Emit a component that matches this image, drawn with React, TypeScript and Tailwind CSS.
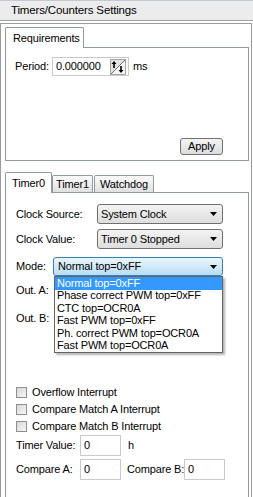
import React, {JSX} from "react";

const modes: string[] = [
    "Normal top=0xFF",
    "Phase correct PWM top=0xFF",
    "CTC top=OCR0A",
    "Fast PWM top=0xFF",
    "Ph. correct PWM top=OCR0A",
    "Fast PWM top=OCR0A",
];

const Arrow = (): JSX.Element => (
    <svg width="7" height="4" viewBox="0 0 7 4">
        <path d="M0 0h7L3.5 4z" fill="#000"/>
    </svg>
);

const Select = ({value, width}: {value: string; width: string}): JSX.Element => (
    <div className={`${width} h-[20px] rounded-[3px] border border-[#707070] bg-linear-to-b from-[#f3f3f3] to-[#dedede] flex items-center justify-between pl-[3px] pr-[5px]`}>
        <span>{value}</span>
        <Arrow/>
    </div>
);

const Check = ({label}: {label: string}): JSX.Element => (
    <div className="h-[17px] flex items-center">
        <div className="w-[11px] h-[11px] border border-[#8e8f8f] bg-linear-to-br from-[#d8d8d8] to-[#f6f6f6]"/>
        <span className="ml-[5px]">{label}</span>
    </div>
);

const Field = ({value}: {value: string}): JSX.Element => (
    <div className="w-[41px] h-[21px] border border-[#c9cacf] bg-white flex items-center pl-[3px]">
        {value}
    </div>
);

const Spinner = (): JSX.Element => (
    <svg width="16" height="16" viewBox="0 0 16 16">
        <rect x="0.5" y="0.5" width="15" height="15" fill="#e4e4e4" stroke="#a5a5a5"/>
        <path d="M1 15L15 1V15z" fill="#f7f7f7"/>
        <path d="M1 15L15 1" stroke="#707070" strokeWidth="1"/>
        <path d="M4 2l-2.5 3h1.7v4h1.6V5h1.7z" fill="#000"/>
        <path d="M11 14l2.5-3h-1.7V7h-1.6v4H8.5z" fill="#000"/>
    </svg>
);

const App: React.FC = (): JSX.Element => {
    return (
        <div className="w-[253px] h-[497px] overflow-hidden bg-white font-['Liberation_Sans',Arial,sans-serif] text-[11px] tracking-[-0.15px] text-black leading-none whitespace-nowrap">
            <div className="h-[21px] border-t border-b border-t-[#c2cad8] border-b-[#a3a3a3] bg-[#ececec] flex items-center pl-[11px] text-[11.5px]">
                Timers/Counters Settings
            </div>

            <div className="mt-[2px] w-[252px] h-[474px] border-x border-t border-[#9c9c9c] pl-[4px] pr-[2px] pt-[3px] flex flex-col">
                {/* requirements */}
                <div className="flex">
                    <div className="relative z-10 -mb-px h-[21px] w-[79px] rounded-t-[2px] border-x border-t border-[#919b9c] bg-white flex items-center pl-[7px]">
                        Requirements
                    </div>
                </div>
                <div className="h-[114px] border border-[#919b9c] pl-[9px] pt-[9px] flex flex-col">
                    <div className="h-[19px] flex items-center">
                        <span className="w-[37px]">Period:</span>
                        <div className="w-[77px] h-[19px] border border-[#c9cacf] flex items-center pl-[3px] pr-[2px]">
                            <span>0.000000</span>
                            <div className="ml-auto">
                                <Spinner/>
                            </div>
                        </div>
                        <span className="ml-[4px]">ms</span>
                    </div>
                    <div className="flex justify-end mt-[62px] pr-[25px]">
                        <div className="w-[43px] h-[17px] rounded-[3px] border border-[#707070] bg-linear-to-b from-[#f4f4f4] to-[#dcdcdc] flex items-center justify-center">
                            Apply
                        </div>
                    </div>
                </div>

                {/* timers */}
                <div className="flex items-end mt-[11px]">
                    <div className="relative z-10 -mb-px h-[21px] w-[47px] rounded-t-[2px] border-x border-t border-[#919b9c] bg-white flex items-center justify-center">
                        Timer0
                    </div>
                    <div className="h-[17px] w-[41px] rounded-t-[2px] border-x border-t border-[#919b9c] bg-linear-to-b from-[#fbfbfb] to-[#e0e0e0] flex items-center justify-center">
                        Timer1
                    </div>
                    <div className="h-[17px] w-[60px] ml-[1px] rounded-t-[2px] border-x border-t border-[#919b9c] bg-linear-to-b from-[#fbfbfb] to-[#e0e0e0] flex items-center justify-center">
                        Watchdog
                    </div>
                </div>
                <div className="flex-1 border-x border-t border-[#919b9c] pl-[10px] pt-[11px] flex flex-col">
                    <div className="flex items-center">
                        <span className="w-[81px]">Clock Source:</span>
                        <Select value="System Clock" width="w-[126px]"/>
                    </div>
                    <div className="flex items-center mt-[5px]">
                        <span className="w-[81px]">Clock Value:</span>
                        <Select value="Timer 0 Stopped" width="w-[126px]"/>
                    </div>
                    <div className="flex items-center mt-[8px]">
                        <span className="w-[37px]">Mode:</span>
                        <div className="relative">
                            <div className="w-[170px] h-[19px] rounded-[3px] border border-[#3c7fb1] bg-linear-to-b from-[#eaf6fd] to-[#b9ddf3] flex items-center justify-between pl-[4px] pr-[5px]">
                                <span>Normal top=0xFF</span>
                                <Arrow/>
                            </div>
                            <div className="absolute z-20 top-[19px] left-[1px] w-[169px] border border-[#646464] bg-white shadow-[2px_2px_2px_rgba(0,0,0,0.3)]">
                                {modes.map((m, i) => (
                                    <div
                                        key={m}
                                        className={`h-[12.5px] flex items-center pl-[2px] ${i === 0 ? "bg-[#3399ff] text-white" : ""}`}
                                    >
                                        {m}
                                    </div>
                                ))}
                            </div>
                        </div>
                    </div>
                    <div className="h-[19px] flex items-center mt-[5px]">Out. A:</div>
                    <div className="h-[19px] flex items-center mt-[9px]">Out. B:</div>

                    <div className="mt-[56px]">
                        <Check label="Overflow Interrupt"/>
                        <Check label="Compare Match A Interrupt"/>
                        <Check label="Compare Match B Interrupt"/>
                    </div>
                    <div className="flex items-center">
                        <span className="w-[64px]">Timer Value:</span>
                        <Field value="0"/>
                        <span className="ml-[7px]">h</span>
                    </div>
                    <div className="flex items-center mt-[3px]">
                        <span className="w-[64px]">Compare A:</span>
                        <Field value="0"/>
                        <span className="ml-[6px] w-[57px]">Compare B:</span>
                        <Field value="0"/>
                    </div>
                </div>
            </div>
        </div>
    );
}

export default App;
